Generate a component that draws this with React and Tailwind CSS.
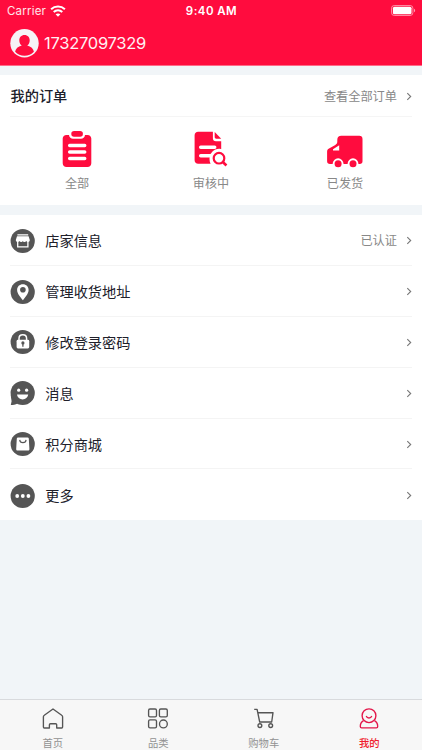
const latin = "font-['Inter','Noto_Sans_CJK_SC',sans-serif]";

function Chevron() {
  return (
    <svg className="block h-[9px] w-[6px] shrink-0" viewBox="0 0 6 9" fill="none" stroke="#777" strokeWidth="1.1">
      <path d="M1.300 1.200l3.400 3.300-3.400 3.300" />
    </svg>
  );
}

function Wifi() {
  return (
    <svg className="h-[12px] w-[16px]" viewBox="0 0 16 12" fill="none" stroke="white" strokeWidth="2">
      <path d="M1.1 4.3C5 .7 11 .7 14.9 4.3" />
      <path d="M3.7 7c2.5-2.2 6.1-2.2 8.6 0" />
      <path d="M8 11.7L5.6 9.3c1.3-1.2 3.5-1.2 4.8 0z" fill="white" stroke="none" />
    </svg>
  );
}

function Battery() {
  return (
    <svg className="mb-[1px] h-[11px] w-[25px]" viewBox="0 0 25 11" fill="none">
      <rect x=".5" y=".5" width="21.4" height="10" rx="2.8" stroke="white" strokeOpacity=".5" />
      <rect x="1.9" y="1.8" width="18.6" height="7.4" rx="1.5" fill="white" />
      <path d="M23 3.8c1.5.4 1.5 3 0 3.4z" fill="white" fillOpacity=".6" />
    </svg>
  );
}

function Avatar() {
  return (
    <svg className="h-[29px] w-[29px]" viewBox="0 0 29 29">
      <circle cx="14.5" cy="14.3" r="14.2" fill="#f6f3f7" />
      <path d="M14.5 5.9c-3.200 0-5.200 2.300-5.200 5.300 0 2.400 1 4.300 2.500 5.300-3.700.9-6.300 3.300-6.700 6.300 2.400 2.500 5.700 4 9.400 4s7-1.500 9.400-4c-.4-3-3-5.400-6.700-6.300 1.500-1 2.500-2.900 2.500-5.300 0-3-2-5.300-5.200-5.300z" fill="#ff0c3e" />
    </svg>
  );
}

function Clipboard() {
  return (
    <svg className="h-[38px] w-[36px]" viewBox="0 0 36 38" fill="#ff0c3e">
      <path d="M7.5 5H10c.3 2.500 2 3.800 4 3.800h8c2 0 3.700-1.300 4-3.800h2.500c2.200 0 3.800 1.500 3.800 3.600v24.600c0 2.200-1.600 3.700-3.800 3.700h-21c-2.200 0-3.800-1.500-3.800-3.700V8.600C3.700 6.500 5.300 5 7.500 5z" />
      <rect x="12.3" y=".9" width="11.6" height="5.9" rx="2.8" />
      <path d="M10.700 15.400h15M10.700 21.900h15M10.700 28.400h15" fill="none" stroke="white" strokeWidth="3.5" strokeLinecap="round" />
    </svg>
  );
}

function Review() {
  return (
    <svg className="h-[38px] w-[36px]" viewBox="0.6 0 36 38">
      <path d="M5.700 1.800h14.800v6.500c0 2 1 3 3 3h5.300v22.500H5.700c-2 0-3.500-1.500-3.500-3.500v-25c0-2 1.500-3.500 3.500-3.500z" fill="#ff0c3e" />
      <path d="M22.300 1.900l6.500 6.800h-4.900c-1 0-1.600-.6-1.600-1.600z" fill="#ff0c3e" />
      <path d="M8.300 17.300h14M8.300 25.700h13" fill="none" stroke="white" strokeWidth="3.5" strokeLinecap="round" />
      <path d="M20.400 37c-1.700-1.700-3.300-4.200-3.300-8 0-5.800 4.100-10.300 9.800-10.300 1.200 0 2.300.2 3.100.5V37z" fill="white" />
      <circle cx="26.600" cy="28.200" r="5.300" fill="none" stroke="#ff0c3e" strokeWidth="2.200" />
      <path d="M30.400 32l3.600 3.500" stroke="#ff0c3e" strokeWidth="2.600" />
    </svg>
  );
}

function Truck() {
  return (
    <svg className="h-[38px] w-[36px]" viewBox="0 0 36 38">
      <path d="M14.300 5.700h18c2 0 3.200 1.200 3.200 3.200v22.300c0 1.800-1 2.800-2.800 2.800H3c-1.800 0-2.900-1-2.900-2.800v-9.400c0-1.300.4-2.200 1.500-3l6.700-3.900c1.600-1 2-1.700 2-3.300V9.700c0-2.500 1.500-4 4-4z" fill="#ff0c3e" />
      <path d="M12.200 15.300v5.100H6v-1.200z" fill="white" />
      <circle cx="11.100" cy="33.700" r="5.400" fill="white" />
      <circle cx="26" cy="33.700" r="5.400" fill="white" />
      <circle cx="11.100" cy="33.700" r="3.500" fill="#ff0c3e" />
      <circle cx="26" cy="33.700" r="3.500" fill="#ff0c3e" />
    </svg>
  );
}

function RowIcon({ name }) {
  return (
    <svg className="h-[26px] w-[26px] shrink-0" viewBox="0.3 0 26 26" fill="white">
      <circle cx="13" cy="13" r="12.1" fill="#555" />
      {name === "store" && (
        <>
          <path d="M7.700 6.300h10.800V7.500H7.700zM7.300 8.200h11.600l1.200 3.800c0 1.200-.8 2-1.800 2-.8 0-1.400-.4-1.700-1-.4.600-1 1-1.800 1-.7 0-1.400-.4-1.700-1-.3.600-1 1-1.700 1-.8 0-1.400-.4-1.800-1-.3.600-.9 1-1.700 1-1 0-1.800-.8-1.800-2z" />
          <path d="M8 12v6.800h10.200V12" fill="none" stroke="white" strokeWidth="1.3" />
        </>
      )}
      {name === "pin" && (
        <>
          <path d="M13.200 5.200c-3.400 0-5.800 2.400-5.800 5.700 0 3.900 3.700 7.300 5.800 10.300 2-3 5.700-6.400 5.700-10.300 0-3.300-2.400-5.700-5.700-5.700z" />
          <circle cx="13.200" cy="10.700" r="2.800" fill="#555" />
        </>
      )}
      {name === "lock" && (
        <>
          <path d="M9.300 12V9.500c0-2.300 1.500-3.700 3.800-3.700s3.800 1.400 3.800 3.700V12" fill="none" stroke="white" strokeWidth="1.5" />
          <rect x="6.900" y="10.800" width="12.600" height="8.700" rx="1.400" />
          <circle cx="13.200" cy="13.900" r="1.600" fill="#555" />
          <path d="M13.200 14v3.700" stroke="#555" strokeWidth="1.3" />
        </>
      )}
      {name === "message" && (
        <>
          <path d="M1 15l.9 6.300-.8 3.700c2.100 0 4.700-.4 6.800-1.600z" fill="#555" />
          <circle cx="9" cy="10.200" r="1.600" />
          <circle cx="16.900" cy="10.200" r="1.600" />
          <path d="M7.300 14.600h11.200c-.4 2.700-2.700 4.800-5.600 4.800s-5.200-2.100-5.600-4.800z" />
        </>
      )}
      {name === "bag" && (
        <>
          <path d="M8.300 6.500h9.600c.7 0 1.100.4 1.200 1l.6 10.400c.1 1-.6 1.600-1.500 1.600H8c-.9 0-1.600-.6-1.500-1.600l.6-10.400c.1-.6.500-1 1.200-1z" />
          <path d="M10 8.900c.3 3.600 6.100 3.600 6.400 0" fill="none" stroke="#555" strokeWidth="1.1" />
        </>
      )}
      {name === "more" && (
        <>
          <circle cx="7.500" cy="13" r="1.900" />
          <circle cx="13.100" cy="13" r="1.900" />
          <circle cx="18.700" cy="13" r="1.900" />
        </>
      )}
    </svg>
  );
}

function TabIcon({ name }) {
  return (
    <svg className="h-[24px] w-[24px]" viewBox="0 0.3 24 24" fill="none" stroke={name === "me" ? "#e3174a" : "#555"} strokeWidth="1.35" strokeLinejoin="round">
      {name === "home" && (
        <path d="M12 2.300l8.700 6.200c.6.400.9.900.9 1.600v10.300c0 .6-.3.900-.9.900h-5v-3.200c0-.7-.4-1.100-1.100-1.100H9.500c-.7 0-1.100.4-1.100 1.100v3.200H3.300c-.6 0-.9-.3-.9-.9V10.100c0-.7.3-1.200.9-1.600z" />
      )}
      {name === "grid" && (
        <>
          <rect x="2.600" y="2.300" width="7.900" height="7.900" rx="1.400" />
          <rect x="13.400" y="2.300" width="7.900" height="7.900" rx="1.400" />
          <rect x="2.600" y="13.200" width="7.900" height="7.900" rx="1.400" />
          <circle cx="17.400" cy="17.200" r="3.900" />
        </>
      )}
      {name === "cart" && (
        <>
          <path d="M2.200 2.700h2.900l2.600 12.600h12l1.300-9.300H5.800" />
          <circle cx="7.900" cy="18.900" r="1.900" />
          <circle cx="18.700" cy="18.900" r="1.900" />
        </>
      )}
      {name === "me" && (
        <>
          <circle cx="12" cy="9" r="6.900" />
          <path d="M9.200 9.300c1 2.600 4.600 2.600 5.600 0" />
          <path d="M6.500 13.900c-2.200 1.400-3.300 3.500-3.200 6 0 .9.500 1.300 1.300 1.300h14.800c.8 0 1.300-.4 1.300-1.300.1-2.500-1-4.600-3.200-6" />
        </>
      )}
    </svg>
  );
}

const orders = [
  ["全部", Clipboard],
  ["审核中", Review],
  ["已发货", Truck],
];

const rows = [
  ["store", "店家信息"],
  ["pin", "管理收货地址"],
  ["lock", "修改登录密码"],
  ["message", "消息"],
  ["bag", "积分商城"],
  ["more", "更多"],
];

const tabs = [
  ["home", "首页"],
  ["grid", "品类"],
  ["cart", "购物车"],
  ["me", "我的"],
];

export default function App() {
  return (
    <div className={`flex h-[750px] w-[422px] flex-col overflow-hidden bg-[#f1f5f8] text-[#20202a] ${latin}`}>
      <header className="h-[66px] shrink-0 border-b border-[#ff6b88] bg-[#ff0c3e] text-white">
        <div className="grid h-[22px] grid-cols-3 items-center pl-[7px] pr-[6px] text-[11.5px] leading-[22px]">
          <div className="flex items-center gap-[4px] text-white/90">
            <span className="tracking-[0.2px]">Carrier</span>
            <Wifi />
          </div>
          <div className="text-center text-[11.5px] font-semibold tracking-[0.45px]">9:40 AM</div>
          <div className="flex justify-end"><Battery /></div>
        </div>
        <div className="flex h-[42px] items-center gap-[5px] pl-[10px]">
          <Avatar />
          <span className="text-[16.5px] tracking-[-0.27px] text-[#fff0f3]">17327097329</span>
        </div>
      </header>

      <section className="mt-[9px] h-[130px] shrink-0 bg-white">
        <div className="mx-[10px] flex h-[42px] items-center border-b border-[#f5f5f5] pt-[1px]">
          <h1 className="grow pl-[0.5px] text-[14.2px] font-medium">我的订单</h1>
          <span className="mr-[9px] pt-[3px] text-[12.2px] text-[#888]">查看全部订单</span>
          <Chevron />
        </div>
        <div className="grid grid-cols-[154px_114px_154px] pt-[13px]">
          {orders.map(([label, Icon]) => (
            <div key={label} className="flex flex-col items-center">
              <Icon />
              <span className="mt-[7px] text-[12.1px] leading-[18px] text-[#888]">{label}</span>
            </div>
          ))}
        </div>
      </section>

      <section className="mt-[10px] shrink-0 bg-white">
        {rows.map(([icon, label], i) => (
          <div key={icon} className="mx-[10px] flex h-[50.9px] items-center border-b border-[#f4f4f4] pt-[1.4px] last:border-b-0">
            <RowIcon name={icon} />
            <span className="ml-[9.3px] grow pt-[1px] text-[14.2px]">{label}</span>
            {i === 0 && <span className="mr-[9px] pt-[2px] text-[12.2px] text-[#888]">已认证</span>}
            <Chevron />
          </div>
        ))}
      </section>

      <nav className="mt-auto grid h-[51px] shrink-0 grid-cols-4 border-t border-[#d8dadd] bg-[#f7f7f7]">
        {tabs.map(([icon, label]) => (
          <div key={icon} className={`flex flex-col items-center pt-[7px] ${icon === "me" ? "font-medium text-[#f01c2c]" : "text-[#929292]"}`}>
            <TabIcon name={icon} />
            <span className="mt-[5px] text-[10.3px] leading-[15px]">{label}</span>
          </div>
        ))}
      </nav>
    </div>
  );
}
